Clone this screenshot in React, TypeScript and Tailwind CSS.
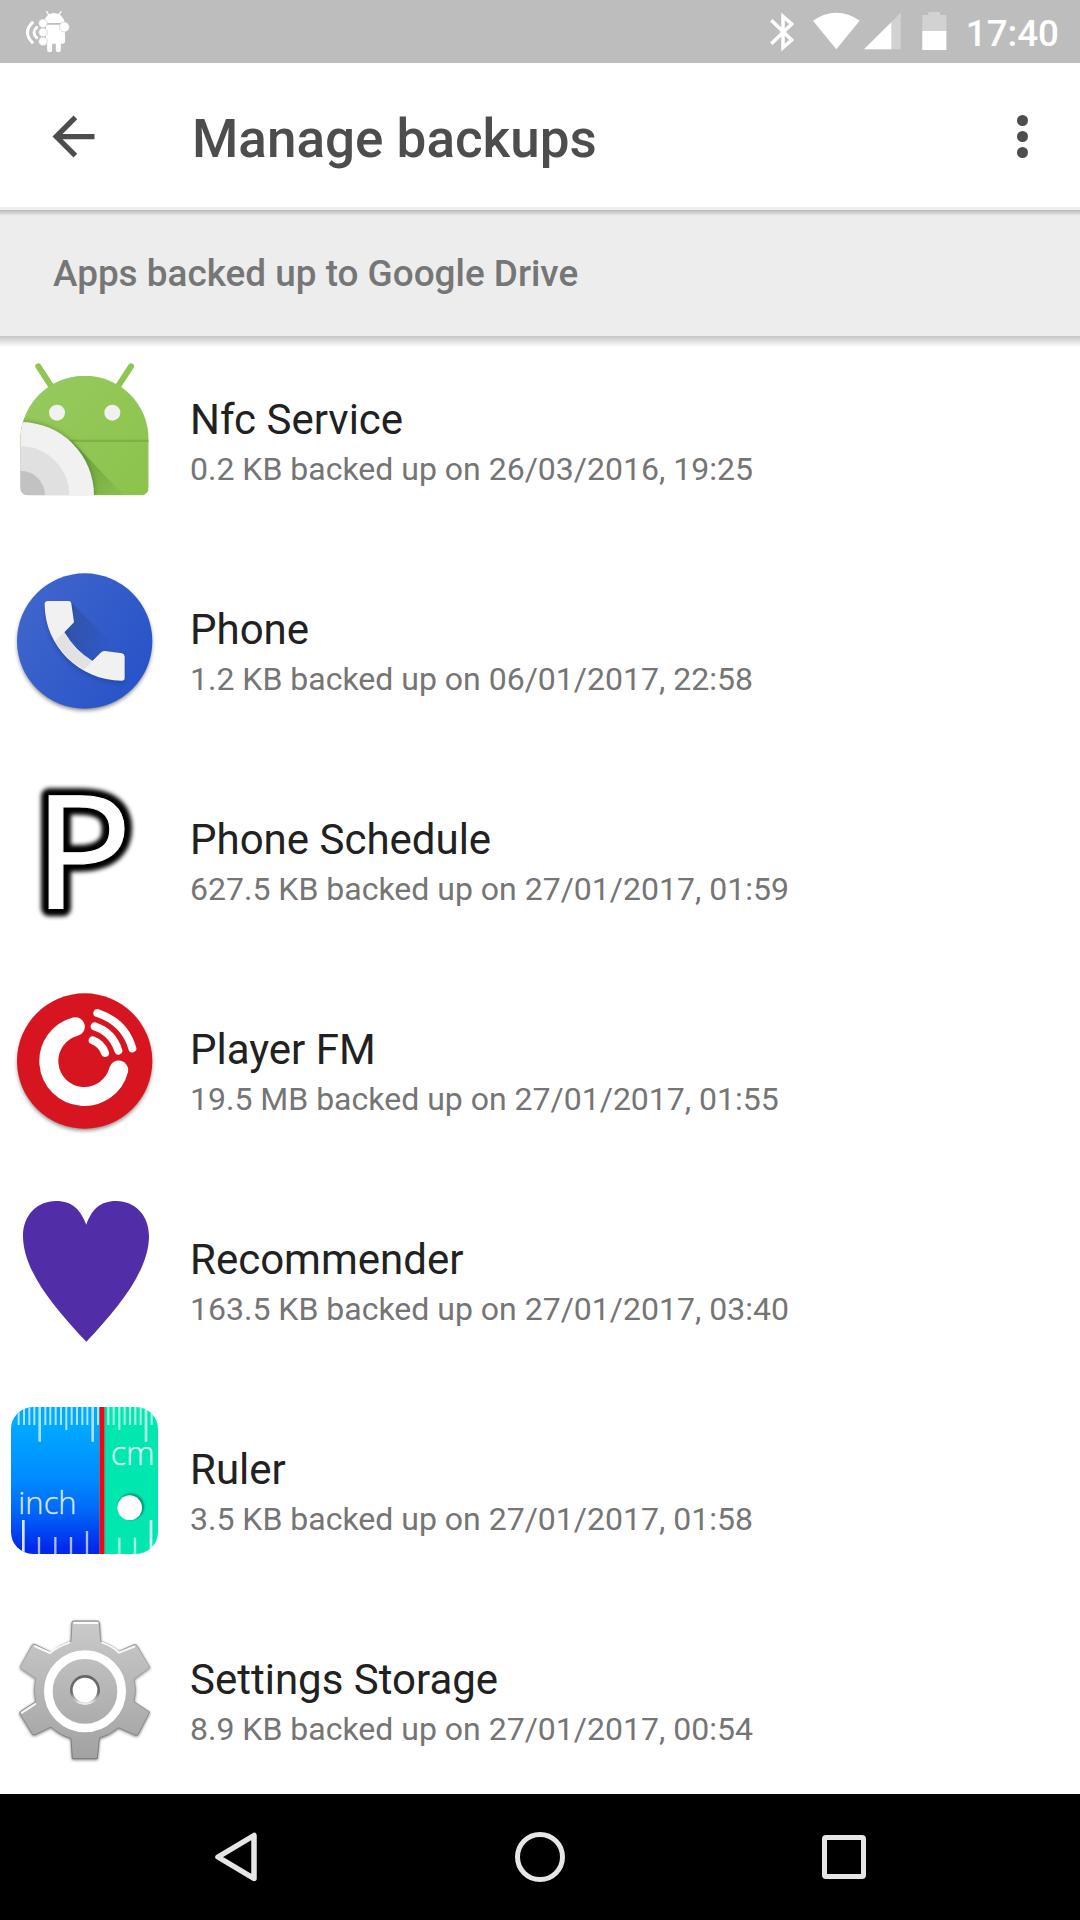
import type { ReactNode } from "react";

function AppIcon({ label, viewBox = "0 0 540 480", children }: { label: string; viewBox?: string; children: ReactNode }) {
  return (
    <svg role="img" aria-label={label} className="h-[160px] w-[180px] shrink-0 overflow-visible" viewBox={viewBox}>
      {children}
    </svg>
  );
}

function NfcIcon() {
  return (
    <AppIcon label="Nfc Service">
      <defs>
        <clipPath id="nfc-body">
          <path d="M61 262C66 158 150 77 254 77C360 77 446 162 446 268V410Q446 436 420 436H87Q61 436 61 410Z" />
        </clipPath>
        <linearGradient id="nfc-green" x1="0" y1="0" x2="1" y2="1">
          <stop offset="0" stopColor="#98ca60" />
          <stop offset="1" stopColor="#8bc34a" />
        </linearGradient>
        <linearGradient id="nfc-shade" gradientUnits="userSpaceOnUse" x1="230" y1="330" x2="340" y2="430">
          <stop offset="0" stopColor="#6fa33d" />
          <stop offset="1" stopColor="#86bd4b" />
        </linearGradient>
        <filter id="nfc-blur"><feGaussianBlur stdDeviation="7" /></filter>
      </defs>
      <path d="M115 49L158 115M393 49L350 115" stroke="#8dc653" strokeWidth="18" strokeLinecap="round" />
      <g clipPath="url(#nfc-body)">
        <rect x="55" y="70" width="400" height="370" fill="url(#nfc-green)" />
        <path d="M215 272L372 436H200Z" fill="url(#nfc-shade)" />
        <rect x="200" y="269" width="250" height="7" fill="#7fb244" />
        <circle cx="64" cy="434" r="220" fill="#456b22" opacity=".5" filter="url(#nfc-blur)" />
        <circle cx="62" cy="436" r="220" fill="#f1f1f1" />
        <circle cx="61" cy="436" r="147" fill="#e0e0e0" />
        <circle cx="61" cy="436" r="74" fill="#c2c2c2" />
      </g>
      <circle cx="171" cy="188" r="24" fill="#f1f1f1" />
      <circle cx="337" cy="188" r="24" fill="#f1f1f1" />
    </AppIcon>
  );
}

function DiscShadow({ id }: { id: string }) {
  return (
    <>
      <filter id={id} x="-10%" y="-10%" width="120%" height="120%"><feGaussianBlur stdDeviation="6" /></filter>
      <circle cx="254" cy="250" r="201" fill="#000" opacity=".5" filter={`url(#${id})`} />
    </>
  );
}

function PhoneIcon() {
  return (
    <AppIcon label="Phone">
      <defs>
        <linearGradient id="phone-blue" x1="0" y1=".2" x2="1" y2=".8">
          <stop offset="0" stopColor="#4066cc" />
          <stop offset="1" stopColor="#2753c8" />
        </linearGradient>
        <linearGradient id="phone-shade" gradientUnits="userSpaceOnUse" x1="200" y1="220" x2="330" y2="230">
          <stop offset="0" stopColor="#3153a9" />
          <stop offset="1" stopColor="#2e59c7" />
        </linearGradient>
        <filter id="phone-soft"><feGaussianBlur stdDeviation="7" /></filter>
      </defs>
      <DiscShadow id="phone-disc" />
      <circle cx="254" cy="243" r="203" fill="url(#phone-blue)" />
      <path d="M213 127L366 280L280 300L190 216Z" fill="url(#phone-shade)" />
      <path d="M134 140C140 280 240 368 372 370L374 300L280 310L195 225L215 135Z" fill="#17387f" opacity=".4" filter="url(#phone-soft)" />
      <path d="M144 123H205Q213 123 214 131L222 187L193 217Q225 272 277 303L302 278Q308 272 315 273L366 280Q374 282 374 290V354Q374 362 365 362C239 362 134 259 134 133Q134 123 144 123Z" fill="#f1f1f1" />
      <path d="M193 217Q225 272 277 303L252 329Q198 300 165 243Z" fill="#e2e2e2" />
    </AppIcon>
  );
}

function LetterIcon() {
  const font = "font-['Open_Sans',sans-serif] text-[473px]";
  return (
    <AppIcon label="Phone Schedule">
      <filter id="letter-blur" x="-20%" y="-20%" width="140%" height="140%"><feGaussianBlur stdDeviation="6.5" /></filter>
      <g transform="translate(-8 0) scale(1.05 1)">
        <text x="102" y="413" className={font} fill="#000" stroke="#000" strokeWidth="46" strokeLinejoin="round" filter="url(#letter-blur)" aria-hidden="true">P</text>
        <text x="102" y="413" className={font} fill="#fff" stroke="#fff" strokeWidth="3">P</text>
      </g>
    </AppIcon>
  );
}

function PlayerIcon() {
  return (
    <AppIcon label="Player FM">
      <DiscShadow id="player-disc" />
      <circle cx="254" cy="243" r="203" fill="#d71521" />
      <g fill="none" stroke="#fff" strokeLinecap="round">
        <path d="M226 140A106.500 106.500 0 1 0 356 270" strokeWidth="57" />
        <path d="M278 181Q306 192 315 219M284 139Q338 157 355 212M292 99Q374 126 397 205" strokeWidth="24" />
      </g>
    </AppIcon>
  );
}

function HeartIcon() {
  return (
    <AppIcon label="Recommender">
      <path d="M259 104C242 61 219 33 168 33C112 33 69 75 69 138C69 238 156 347 259 455C362 347 447 238 447 138C447 75 404 33 349 33C298 33 274 61 259 104Z" fill="#512da8" />
    </AppIcon>
  );
}

const minorTicks = [56, 72, 88, 103, 136, 151, 167, 183, 215, 231, 247, 262, 294, 325, 341, 374, 390, 406, 422, 455];

function RulerIcon() {
  return (
    <AppIcon label="Ruler" viewBox="0 15 540 480">
      <defs>
        <clipPath id="ruler-box"><rect x="33" y="36" width="441" height="441" rx="66" /></clipPath>
        <linearGradient id="ruler-blue" x1="0" y1="0" x2="0" y2="1">
          <stop offset=".12" stopColor="#00aaff" />
          <stop offset=".5" stopColor="#008aff" />
          <stop offset=".72" stopColor="#0065f8" />
          <stop offset=".96" stopColor="#0029ed" />
        </linearGradient>
        <filter id="ruler-soft"><feGaussianBlur stdDeviation="3" /></filter>
      </defs>
      <g clipPath="url(#ruler-box)">
        <rect x="33" y="36" width="270" height="441" fill="url(#ruler-blue)" />
        <rect x="303" y="36" width="171" height="441" fill="#00e8b0" />
        <g stroke="#fff" strokeOpacity=".68">
          {minorTicks.map((x) => <path key={x} d={`M${x} 36V90`} strokeWidth="6" />)}
          <path d="M199 36V105M358 36V105" strokeWidth="6" />
          <path d="M119 36V140M278 36V140M438 36V140" strokeWidth="8" />
          <path d="M70 375V477M453 375V477" strokeWidth="8" strokeOpacity=".85" />
          <path d="M117 426V477M166 426V477M213 426V477M261 408V477M358 428V477M405 428V477" strokeWidth="7" />
        </g>
        <rect x="297" y="36" width="19" height="441" fill="#6b7a70" opacity=".7" />
        <rect x="300" y="36" width="12" height="441" fill="#ff0010" />
        <circle cx="393" cy="335" r="39" fill="#07684f" opacity=".7" filter="url(#ruler-soft)" />
        <circle cx="389" cy="338" r="37" fill="#fff" />
        <text x="55" y="356" textLength="175" lengthAdjust="spacingAndGlyphs" className="font-['Open_Sans',sans-serif] text-[96px] font-light" fill="#fff" fillOpacity=".84" stroke="#fff" strokeOpacity=".5" strokeWidth="1.500">inch</text>
        <text x="332" y="209" textLength="132" lengthAdjust="spacingAndGlyphs" className="font-['Open_Sans',sans-serif] text-[98px] font-light" fill="#fff" fillOpacity=".84" stroke="#fff" strokeOpacity=".5" strokeWidth="1.500">cm</text>
      </g>
    </AppIcon>
  );
}

const gearPath =
  "M216 52Q217 48 222 48H293Q297 48 298 53L302 109Q333 118 357 139L402 119Q408 117 411 122L450 187L402 222Q411 255 402 290L449 321L415 388Q412 393 405 390L356 368Q329 391 298 399L292 461H217L213 400Q179 390 153 366L105 389Q99 391 96 386L60 327Q58 321 63 318L107 290Q99 256 107 220L64 191Q59 188 62 182L96 121Q99 116 105 118L154 142Q181 118 213 109Z";

function GearIcon() {
  return (
    <AppIcon label="Settings Storage" viewBox="0 15 540 480">
      <defs>
        <linearGradient id="gear-face" x1="0" y1="0" x2="0" y2="1">
          <stop offset="0" stopColor="#cacaca" />
          <stop offset="1" stopColor="#a2a2a2" />
        </linearGradient>
        <linearGradient id="gear-rim" x1="0" y1="0" x2="0" y2="1">
          <stop offset="0" stopColor="#888" />
          <stop offset=".3" stopColor="#aaa" />
          <stop offset="1" stopColor="#777" />
        </linearGradient>
        <linearGradient id="gear-hole" x1="0" y1="0" x2="0" y2="1">
          <stop offset="0" stopColor="#666" />
          <stop offset=".6" stopColor="#6c6c6c" />
          <stop offset="1" stopColor="#eee" />
        </linearGradient>
        <filter id="gear-blur" x="-10%" y="-10%" width="120%" height="120%"><feGaussianBlur stdDeviation="5" /></filter>
        <filter id="gear-edge"><feGaussianBlur stdDeviation="2.200" /></filter>
      </defs>
      <path d={gearPath} transform="translate(0 3)" fill="#333" stroke="#333" strokeWidth="3" opacity=".6" filter="url(#gear-blur)" />
      <path d={gearPath} fill="url(#gear-face)" stroke="url(#gear-rim)" strokeWidth="3" />
      <path d="M222 54H292M105 124L150 144Q174 125 208 113M306 113Q335 122 357 143L403 125M66 323L106 297" fill="none" stroke="#fff" strokeWidth="6" opacity=".9" strokeLinecap="round" />
      <circle cx="255" cy="259" r="110" fill="none" stroke="#fff" strokeWidth="26" />
      <circle cx="255" cy="256" r="42" fill="#fff" />
      <circle cx="255" cy="255" r="41" fill="none" stroke="url(#gear-hole)" strokeWidth="8" filter="url(#gear-edge)" />
    </AppIcon>
  );
}

const backups = [
  { name: "Nfc Service", detail: "0.2 KB backed up on 26/03/2016, 19:25", Icon: NfcIcon },
  { name: "Phone", detail: "1.2 KB backed up on 06/01/2017, 22:58", Icon: PhoneIcon },
  { name: "Phone Schedule", detail: "627.5 KB backed up on 27/01/2017, 01:59", Icon: LetterIcon },
  { name: "Player FM", detail: "19.5 MB backed up on 27/01/2017, 01:55", Icon: PlayerIcon },
  { name: "Recommender", detail: "163.5 KB backed up on 27/01/2017, 03:40", Icon: HeartIcon },
  { name: "Ruler", detail: "3.5 KB backed up on 27/01/2017, 01:58", Icon: RulerIcon },
  { name: "Settings Storage", detail: "8.9 KB backed up on 27/01/2017, 00:54", Icon: GearIcon },
];

function StatusBar() {
  return (
    <div className="flex h-[63px] shrink-0 items-center justify-between bg-[#bdbdbd] pr-[21px] pl-6 text-white">
      <svg className="h-[63px] w-12" viewBox="72 0 144 189" fill="none" aria-hidden="true">
        <g stroke="#fff" strokeLinecap="round">
          <path d="M97 68Q68 97 97 127M110 82Q94 97 110 113" strokeWidth="9" />
          <path d="M140 35L148 47M183 35L175 47" strokeWidth="4" />
          <path d="M149 125V149M175 125V149" strokeWidth="15" />
        </g>
        <path d="M130 69Q138 39 162 39Q187 39 195 69ZM138 74H195V125Q195 131 188 131H138Z" fill="#fff" />
        <g fill="#fff" stroke="#c8c8c8" strokeWidth="2">
          <circle cx="129" cy="70" r="13" />
          <circle cx="129" cy="97" r="13" />
          <circle cx="129" cy="124" r="13" />
          <circle cx="193" cy="81" r="15" />
        </g>
      </svg>
      <div className="flex items-center gap-[13px]">
        <svg className="h-[63px] w-[186px]" viewBox="80 0 558 189" fill="none" aria-hidden="true">
          <path d="M93 61L154 120L128 143V49L154 72L93 131" stroke="#fff" strokeWidth="10.500" />
          <path d="M218 62Q251 38 288 38Q325 38 358 62L288 148Z" fill="#fff" />
          <path d="M481 38V148H371Z" fill="#d2d2d2" />
          <path d="M453 67V148H371Z" fill="#fff" />
          <path d="M546 45H564V36H599V45H618V150H546Z" fill="#d2d2d2" />
          <path d="M546 93H618V150H546Z" fill="#fff" />
        </svg>
        <span className="pt-[5px] text-[36.75px] leading-none font-medium">17:40</span>
      </div>
    </div>
  );
}

function Toolbar() {
  return (
    <header className="flex h-36 shrink-0 items-center bg-white pr-[38px] pl-[42px] text-[#4d4d4d]">
      <button aria-label="Back" className="mt-0.5 mr-[87px]">
        <svg className="h-[63px] w-[63px]" viewBox="0 0 24 24" fill="currentColor">
          <path d="M20 11H7.830l5.590-5.590L12 4l-8 8 8 8 1.410-1.410L7.830 13H20v-2z" />
        </svg>
      </button>
      <h1 className="grow pt-[9px] text-[53px] leading-none font-medium">Manage backups</h1>
      <button aria-label="More options" className="flex w-[39px] flex-col items-center gap-[5px] pt-[3px]">
        <span className="size-[11px] rounded-full bg-[#4d4d4d]" />
        <span className="size-[11px] rounded-full bg-[#4d4d4d]" />
        <span className="size-[11px] rounded-full bg-[#4d4d4d]" />
      </button>
    </header>
  );
}

export default function App() {
  return (
    <div className="flex h-[1920px] w-[1080px] flex-col overflow-hidden bg-white font-[Roboto,sans-serif]">
      <StatusBar />
      <Toolbar />
      <div className="h-[3px] shrink-0 bg-[#eee]" />
      <div className="h-[6px] shrink-0 bg-linear-to-b from-[#b9b9b9] to-[#ededed]" />
      <div className="flex h-[120px] shrink-0 items-center bg-[#ededed] px-[53px] pb-[3px]">
        <h2 className="text-[36.9px] leading-none font-medium text-[#767676]">Apps backed up to Google Drive</h2>
      </div>
      <div className="h-[11px] shrink-0 bg-linear-to-b from-[#c5c5c5] to-white" />
      <main className="h-[1447px] shrink-0 overflow-hidden pt-[3px]">
        <ul>
          {backups.map(({ name, detail, Icon }) => (
            <li key={name} className="flex h-[210px] items-start gap-[10px]">
              <Icon />
              <div className="pt-[45px]">
                <h3 className="text-[42px] leading-[49px] text-[#212121]">{name}</h3>
                <p className="mt-[6px] text-[32px] leading-[38px] text-[#757575]">{detail}</p>
              </div>
            </li>
          ))}
        </ul>
      </main>
      <nav className="flex h-[126px] shrink-0 items-center bg-black pl-[204px]">
        <button aria-label="Back">
          <svg className="size-16" viewBox="0 0 64 64" fill="none" stroke="#e6e6e6" strokeWidth="5.500" strokeLinejoin="round"><path d="M14 32L50 10.500V53.500Z" /></svg>
        </button>
        <button aria-label="Home" className="ml-[247px] size-[50px] rounded-full border-[5.500px] border-[#e6e6e6]" />
        <button aria-label="Recent apps" className="ml-[257px] size-11 rounded-[4px] border-[5px] border-[#e6e6e6]" />
      </nav>
    </div>
  );
}
